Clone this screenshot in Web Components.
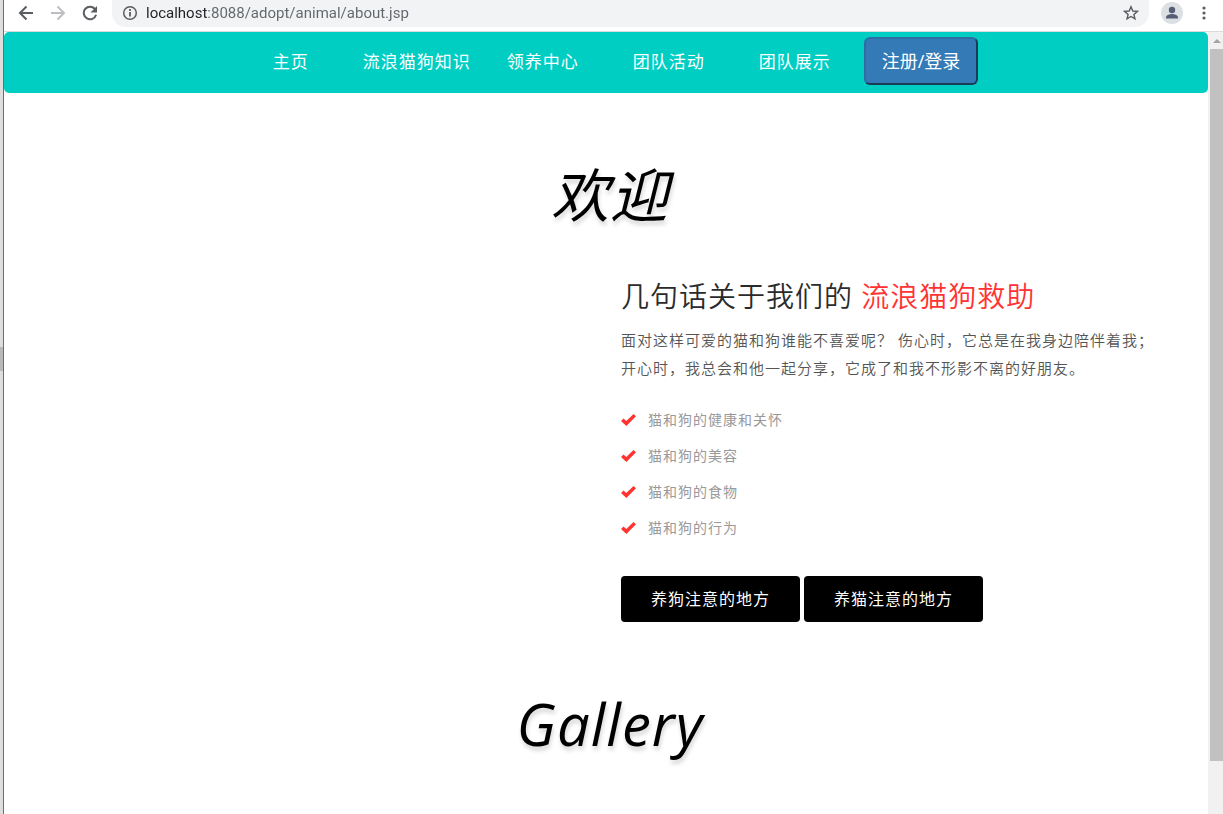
<!DOCTYPE html>
<html lang="zh-CN">
<head>
<meta charset="utf-8">
<title>流浪猫狗救助</title>
<style>
  html, body { margin: 0; height: 100%; }
  body { background: #fff; font-family: "Open Sans", "Noto Sans CJK SC", sans-serif; overflow: hidden; }
</style>
</head>
<body>
<browser-window>
  <browser-toolbar slot="toolbar"></browser-toolbar>
  <site-nav>
    <nav-link>主页</nav-link>
    <nav-link wide>流浪猫狗知识</nav-link>
    <nav-link>领养中心</nav-link>
    <nav-link>团队活动</nav-link>
    <nav-link>团队展示</nav-link>
    <login-button slot="action">注册/登录</login-button>
  </site-nav>
  <section-title>欢迎</section-title>
  <about-section>
    <span slot="lead">几句话关于我们的</span>
    <span slot="accent">流浪猫狗救助</span>
    <span slot="text">面对这样可爱的猫和狗谁能不喜爱呢？ 伤心时，它总是在我身边陪伴着我；<br>开心时，我总会和他一起分享，它成了和我不形影不离的好朋友。</span>
    <check-item slot="items">猫和狗的健康和关怀</check-item>
    <check-item slot="items">猫和狗的美容</check-item>
    <check-item slot="items">猫和狗的食物</check-item>
    <check-item slot="items">猫和狗的行为</check-item>
    <dark-button slot="actions">养狗注意的地方</dark-button>
    <dark-button slot="actions">养猫注意的地方</dark-button>
  </about-section>
  <section-title>Gallery</section-title>
</browser-window>

<script>
const define = (name, html) => {
  const template = document.createElement('template');
  template.innerHTML = html;
  customElements.define(name, class extends HTMLElement {
    constructor() {
      super();
      this.attachShadow({ mode: 'open' }).append(template.content.cloneNode(true));
    }
  });
};

define('browser-window', `
  <style>
    :host { display: grid; grid-template-columns: 4px minmax(0, 1fr); height: 100vh; }
    .edge { display: grid; grid-template-rows: 347px 24px 1fr; background: #dededd; border-right: 1px solid #6e6e6e; }
    .edge i { grid-row: 2; background: #b9b9b8; }
    .main { display: grid; grid-template-rows: auto minmax(0, 1fr); }
    .view { display: grid; grid-template-columns: minmax(0, 1fr) 15px; min-height: 0; }
    .page { overflow: hidden; }
  </style>
  <div class="edge"><i></i></div>
  <div class="main">
    <slot name="toolbar"></slot>
    <div class="view">
      <main class="page"><slot></slot></main>
      <page-scrollbar></page-scrollbar>
    </div>
  </div>`);

define('page-scrollbar', `
  <style>
    :host { display: flex; flex-direction: column; background: #f1f1f1; padding-left: 2px; }
    svg { display: block; flex: none; }
    .thumb { background: #c1c1c1; height: 91%; }
  </style>
  <svg width="13" height="17" viewBox="0 0 13 17"><path d="M3 11h8L7 7z" fill="#a3a3a3"/></svg>
  <div class="thumb"></div>`);

define('browser-toolbar', `
  <style>
    :host { display: flex; align-items: flex-start; height: 31px; border-bottom: 1px solid #d9dbde; padding: 0 7px 0 10px; background: #fff; }
    button { border: 0; background: none; padding: 0; width: 24px; height: 26px; display: grid; place-items: center; flex: none; }
    .nav { display: flex; gap: 8px; }
    .address { flex: 1; display: flex; align-items: flex-start; margin: 0 11px 0 10px; background: #f1f3f4; height: 27px; border-radius: 0 0 14px 14px; padding: 0 6px; gap: 4px; }
    .address svg { flex: none; display: block; }
    input { flex: 1; min-width: 0; border: 0; padding: 0; outline: 0; font: 15px Roboto, sans-serif;
      height: 25px; color: transparent; background: linear-gradient(90deg, #202124 61px, #62666b 61px); -webkit-background-clip: text; background-clip: text; }
    .menu { margin-left: 8px; }
  </style>
  <div class="nav">
    <button aria-label="后退"><svg width="16" height="16" viewBox="0 0 16 16" fill="none" stroke="#5a5d61" stroke-width="2"><path d="M15 8H2M8.500 1.500 2 8l6.500 6.500"/></svg></button>
    <button aria-label="前进"><svg width="16" height="16" viewBox="0 0 16 16" fill="none" stroke="#bcbec1" stroke-width="2"><path d="M1 8h13M7.500 1.500 14 8l-6.500 6.500"/></svg></button>
    <button aria-label="刷新"><svg width="16" height="16" viewBox="0 0 16 16"><path d="M13.200 4.300A6.300 6.300 0 1 0 14.100 9.800" fill="none" stroke="#5a5d61" stroke-width="2"/><path d="M15 1v6.500H8.500z" fill="#5a5d61"/></svg></button>
  </div>
  <div class="address">
    <svg width="24" height="26" viewBox="0 0 24 26" fill="none" stroke="#5a5d61"><circle cx="12" cy="13" r="6.300" stroke-width="1.500"/><path d="M12 12v4.500M12 9v2" stroke-width="1.800"/></svg>
    <input aria-label="网址" value="localhost:8088/adopt/animal/about.jsp">
    <button aria-label="收藏"><svg width="16" height="16" viewBox="0 0 16 16"><path d="M8 1.800 9.800 6l4.600.400-3.500 3 1.050 4.500L8 11.500l-3.950 2.400 1.050-4.500-3.500-3L6.200 6z" fill="none" stroke="#5a5d61" stroke-width="1.400"/></svg></button>
  </div>
  <button aria-label="用户"><svg width="22" height="22" viewBox="0 0 22 22"><circle cx="11" cy="11" r="11" fill="#dcdfe4"/><circle cx="11" cy="8" r="3.200" fill="#545d72"/><path d="M5 16.500v-1.300c0-2.200 4-3.200 6-3.200s6 1 6 3.200v1.300z" fill="#545d72"/></svg></button>
  <button class="menu" aria-label="菜单"><svg width="4" height="16" viewBox="0 0 4 16" fill="#5a5d61"><circle cx="2" cy="3" r="1.600"/><circle cx="2" cy="8" r="1.600"/><circle cx="2" cy="13" r="1.600"/></svg></button>`);

define('site-nav', `
  <style>
    :host { display: block; background: #00cec3; border-radius: 5px; }
    nav { display: flex; justify-content: center; align-items: flex-start; padding: 5px 0 6px 12px; }
  </style>
  <nav><slot></slot><slot name="action"></slot></nav>`);

define('nav-link', `
  <style>
    :host { display: block; padding: 0 27px; }
    :host([wide]) { margin-right: -18px; }
    a { display: block; color: #fff; text-decoration: none; font-size: 17px; line-height: 50px; letter-spacing: 1px; white-space: nowrap; }
  </style>
  <a href="#"><slot></slot></a>`);

define('login-button', `
  <style>
    :host { display: block; margin-left: 6px; }
    button { font: 18px/26px "Open Sans", "Noto Sans CJK SC", sans-serif; color: #fff; background: #337ab7; border: 2px solid;
      border-color: #2e6da4 #1b3c59 #1b3c59 #2e6da4; border-radius: 6px; padding: 9px 16px; display: block; white-space: nowrap; }
  </style>
  <button><slot></slot></button>`);

define('section-title', `
  <style>
    :host { display: block; padding: 62px 0 39px 8px; text-align: center; }
    h2 { margin: 0; color: #000; font-size: 58px; line-height: 80px; font-weight: 400; font-style: italic; letter-spacing: 1px; text-shadow: 1px 4px 4px rgba(0, 0, 0, .16); }
  </style>
  <h2><slot></slot></h2>`);

define('about-section', `
  <style>
    :host { display: grid; grid-template-columns: 1fr 1fr; }
    .copy { grid-column: 2; padding: 0 15px; letter-spacing: 1px; }
    h3 { margin: 0 0 8px; font-size: 28px; line-height: 44px; font-weight: 350; color: #2b2b2b; }
    h3 b { font-weight: 350; color: #ff3333; }
    p { margin: 0; font-size: 15px; line-height: 28px; color: #555; font-weight: 350; white-space: nowrap; }
    ul { list-style: none; margin: 20px 0 30px; padding: 0; }
    .actions { display: flex; gap: 4px; }
  </style>
  <div class="copy">
    <h3><slot name="lead"></slot> <b><slot name="accent"></slot></b></h3>
    <p><slot name="text"></slot></p>
    <ul role="list"><slot name="items"></slot></ul>
    <div class="actions"><slot name="actions"></slot></div>
  </div>`);

define('check-item', `
  <style>
    :host { display: block; }
    li { display: flex; align-items: center; gap: 12px; font-size: 14px; line-height: 36px; color: #999; }
    svg { flex: none; }
  </style>
  <li><svg width="15" height="12" viewBox="0 0 15 12"><path d="M0 7 2.500 4.600 5.300 7 12.500 0 15 2.300 5.400 12z" fill="#ff3430"/></svg><slot></slot></li>`);

define('dark-button', `
  <style>
    :host { display: block; }
    button { display: block; border: 0; border-radius: 4px; background: #000; color: #fff; padding: 11px 30px; white-space: nowrap;
      font: 16px/24px "Open Sans", "Noto Sans CJK SC", sans-serif; letter-spacing: 1px; }
  </style>
  <button><slot></slot></button>`);
</script>
</body>
</html>
